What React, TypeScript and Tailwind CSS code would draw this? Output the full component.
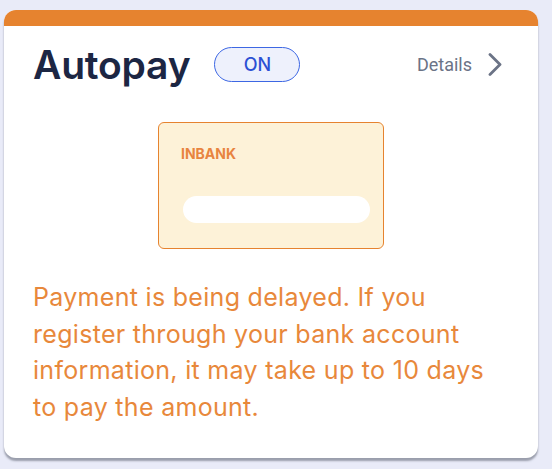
export default function App() {
  return (
    <div className="min-h-[469px] w-[552px] bg-[#e9ebf8] pt-[10px] pl-[4px]">
      <div className="w-[534px] overflow-hidden rounded-[12px] bg-white shadow-[0_3px_2px_rgba(90,95,110,0.55)]">
        <div className="h-[16px] bg-[#e6832f]" />
        <div className="pl-[29px] pr-[40px] pt-[19px] pb-[32px]">
          {/* header */}
          <div className="flex items-center">
            <h1 className="font-['Inter',sans-serif] text-[39px] font-semibold leading-none tracking-[-0.2px] text-[#1c2643]">
              Autopay
            </h1>
            <span className="ml-[24px] flex h-[35px] w-[86px] items-center justify-center rounded-full border border-[#3d67e3] bg-[#eef1fc] font-['Inter',sans-serif] text-[18px] font-medium text-[#2c50d4]">
              ON
            </span>
            <div className="ml-auto mr-[-4px] flex items-center gap-[16px] font-['Roboto',sans-serif] text-[18px] text-[#6b7386]">
              Details
              <svg width="14" height="23" viewBox="0 0 14 23" fill="none" className="text-[#6b7386]">
                <path d="M2 1.5 L12 11.5 L2 21.5" stroke="currentColor" strokeWidth="2.8" strokeLinecap="round" strokeLinejoin="round" />
              </svg>
            </div>
          </div>

          {/* bank card */}
          <div className="mt-[38px] flex justify-center pl-[11px]">
            <div className="h-[127px] w-[226px] rounded-[6px] border border-[#e6832f] bg-[#fdf2d8] pl-[22px] pt-[24px]">
              <div className="font-['Inter',sans-serif] text-[14px] font-bold leading-none text-[#e8843f]">
                INBANK
              </div>
              <div className="ml-[2px] mt-[35px] h-[27px] w-[187px] rounded-full bg-white" />
            </div>
          </div>

          {/* message */}
          <p className="mt-[30px] font-['Inter',sans-serif] text-[25px] leading-[36.7px] tracking-[0.3px] text-[#e8883b]">
            Payment is being delayed. If you
            <br />
            register through your bank account
            <br />
            information, it may take up to 10 days
            <br />
            to pay the amount.
          </p>
        </div>
      </div>
    </div>
  );
}
